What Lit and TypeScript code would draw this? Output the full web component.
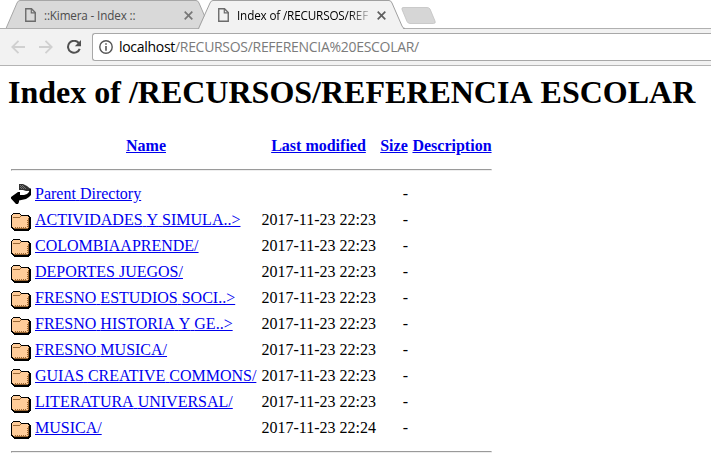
import { LitElement, html, css } from "lit";
import { customElement } from "lit/decorators.js";

const pageIcon = html`<svg class="page" width="11" height="14" viewBox="0 0 11 14">
  <path d="M.75 .75H6.5L10.25 4.5V13.25H.75Z" fill="none" stroke="currentColor" stroke-width="1.4"/>
  <path d="M6.3 .9V4.8H10.2" fill="none" stroke="currentColor" stroke-width="1.2"/>
</svg>`;

const closeIcon = html`<svg class="close" width="9" height="9" viewBox="0 0 9 9">
  <path d="M.7 .7L8.3 8.3M8.3 .7L.7 8.3" stroke="currentColor" stroke-width="1.7"/>
</svg>`;

const folderIcon = html`<svg width="20" height="22" viewBox="0 0 20 22" shape-rendering="crispEdges">
  <path fill="#000" d="M2 4h7v1h1v1h8v1h1v1h1v12h-1v1h-1v1h-15v-1h-1v-1h-1v-1h-1v-13h1v-1h1z"/>
  <path fill="#ffcc99" d="M2 5h7v1h1v1h7v1h1v11h-1v1h-14v-1h-1v-1h-1v-12h1z"/>
  <path fill="#996633" d="M2 8h7v1h-7zM9 7h1v1h-1zM17 9h1v10h-1zM3 19h14v1h-14z"/>
  <path fill="#996633" d="M4 18h1v1h-1zM6 18h1v1h-1zM8 18h1v1h-1zM10 18h1v1h-1zM12 18h1v1h-1zM14 18h1v1h-1zM16 17h1v1h-1zM16 15h1v1h-1zM16 13h1v1h-1zM16 11h1v1h-1z"/>
</svg>`;

const backIcon = html`<svg width="20" height="22" viewBox="0 0 20 22">
  <path fill="#333" d="M8 1H12L16 3L19 5.500V8H15L12 7H8Z"/>
  <path fill="#777" d="M9 2h1v1h-1zM11 2h1v1h-1zM10 3h1v1h-1zM12 3h1v1h-1zM9 4h1v1h-1zM11 4h1v1h-1zM13 4h1v1h-1zM10 5h1v1h-1zM12 5h1v1h-1zM14 5h1v1h-1z"/>
  <path fill="#000" d="M19 5L20 6V12L18 14L15 16L8 17.500V19L7 21H5L0 15.500V14L7 9H9V12H13L16 11L18 9Z"/>
</svg>`;

// Spaces sit in their own span so that letters are kerned within words only.
const words = (text: string) =>
  text.split(" ").map((w, i) => (i ? html`<span class="sp"> </span>${w}` : w));

@customElement("browser-chrome")
class BrowserChrome extends LitElement {
  static styles = css`
    :host { display: block; position: relative; height: 66px; font-family: "Open Sans", "Noto Sans", sans-serif; }
    .shape { position: absolute; inset: 0; width: 711px; height: 29px; }
    .tabs { position: relative; display: flex; height: 29px; color: #000; font-size: 11.7px; line-height: 30px; }
    .tab { display: flex; align-items: center; width: 193px; box-sizing: border-box; padding-left: 25px; }
    .tab.first { color: #4c4c4c; }
    .page { color: #6b6b6b; flex: none; margin-top: 1px; }
    .title { margin-left: 8px; width: 133px; overflow: hidden; white-space: nowrap; letter-spacing: -.15px; }
    .second .title { -webkit-mask-image: linear-gradient(90deg, #000 112px, transparent 136px); mask-image: linear-gradient(90deg, #000 112px, transparent 136px); }
    .close { margin: 1px 0 0 8px; color: #5f5f5f; flex: none; }
    .first .close { color: #777; }
    .bar { display: flex; align-items: center; height: 36px; background: #f2f2f2; border-bottom: 1px solid #b4b4b4; }
    .nav { display: flex; align-items: center; padding-left: 11px; gap: 14px; width: 81px; }
    .field { display: flex; align-items: center; flex: 1; height: 26px; border: 1px solid #a8a8a8; border-right: 0; border-radius: 3px 0 0 3px; background: #fff; padding-left: 6px; }
    .url { margin-left: 6px; font-size: 14px; line-height: 26px; color: #7b7b7b; white-space: nowrap; letter-spacing: -.3px; }
    .host { color: #000; }
  `;
  render() {
    return html`
      <svg class="shape" viewBox="0 0 711 29">
        <path d="M6 28.5L17 3Q18 .5 20 .5H196Q198 .5 199 3L210 28.5Z" fill="#d9d9d9" stroke="#a6a6a6"/>
        <path d="M0 28.5H711" stroke="#b0b0b0"/>
        <path d="M199 29L210 3Q211 .5 213 .5H389Q391 .5 392 3L403 28.5V29Z" fill="#f2f2f2"/>
        <path d="M198.500 28.500L210 3Q211 .5 213 .5H389Q391 .5 392 3L402 26Q403 28.500 405 28.500" fill="none" stroke="#a0a0a0"/>
        <path d="M403 7.500H427Q429 7.500 430 9L435 21Q436 23.500 433.500 23.500H410Q408 23.500 407 21.500L402 9.500Q401.500 7.500 403 7.500Z" fill="#d6d6d6" stroke="#c2c2c2" stroke-width=".8"/>
      </svg>
      <div class="tabs">
        <div class="tab first">${pageIcon}<span class="title">::Kimera - Index ::</span>${closeIcon}</div>
        <div class="tab second">${pageIcon}<span class="title">Index of /RECURSOS/REF</span>${closeIcon}</div>
      </div>
      <div class="bar">
        <div class="nav">
          <svg width="14" height="14" viewBox="0 0 14 14"><path d="M14 7H1.500M7.500 .8L1.300 7L7.500 13.200" fill="none" stroke="#d0d0d0" stroke-width="1.8"/></svg>
          <svg width="14" height="14" viewBox="0 0 14 14"><path d="M0 7H12.500M6.500 .8L12.700 7L6.500 13.200" fill="none" stroke="#d0d0d0" stroke-width="1.8"/></svg>
          <svg width="14" height="14" viewBox="0 0 14 14"><path d="M11.700 3A6 6 0 1 0 12.700 8.800" fill="none" stroke="#505050" stroke-width="2"/><path d="M14 0V6.200H7.800Z" fill="#505050"/></svg>
        </div>
        <div class="field">
          <svg width="14" height="14" viewBox="0 0 14 14"><circle cx="7" cy="7" r="6.200" fill="none" stroke="#555" stroke-width="1.400"/><path d="M7 6V10.800M7 3.200V4.800" stroke="#555" stroke-width="1.600"/></svg>
          <span class="url"><span class="host">localhost</span>/RECURSOS/REFERENCIA%20ESCOLAR/</span>
        </div>
      </div>`;
  }
}

@customElement("directory-listing")
class DirectoryListing extends LitElement {
  static styles = css`
    :host { display: block; padding: 8px; font: 16px/18px "Liberation Serif", "Times New Roman", serif; color: #000; }
    h1 { margin: 0 0 21px; font-size: 32px; line-height: 36px; height: 37px; font-weight: bold; white-space: nowrap; }
    table { border-spacing: 2px; table-layout: fixed; width: 487px; }
    th, td { padding: 1px; vertical-align: top; white-space: nowrap; text-align: left; height: 22px; }
    th { text-align: center; }
    th a, .name a, .date span, .size span { display: inline-block; padding-top: 2px; }
    .sp { font-kerning: none; }
    .rule { height: auto; }
    .date, .size { text-align: right; }
    svg { display: block; }
    a { color: #0000ee; text-decoration: underline; }
    hr { margin: 8px 0; border: 1px solid; border-color: #9a9a9a #eee #eee #9a9a9a; }
    .c1 { width: 22px; } .c2 { width: 224px; } .c3 { width: 117px; } .c4 { width: 30px; }
  `;
  static rows: [string, string][] = [
    ["ACTIVIDADES Y SIMULA..>", "2017-11-23 22:23"],
    ["COLOMBIAAPRENDE/", "2017-11-23 22:23"],
    ["DEPORTES JUEGOS/", "2017-11-23 22:23"],
    ["FRESNO ESTUDIOS SOCI..>", "2017-11-23 22:23"],
    ["FRESNO HISTORIA Y GE..>", "2017-11-23 22:23"],
    ["FRESNO MUSICA/", "2017-11-23 22:23"],
    ["GUIAS CREATIVE COMMONS/", "2017-11-23 22:23"],
    ["LITERATURA UNIVERSAL/", "2017-11-23 22:23"],
    ["MUSICA/", "2017-11-23 22:24"],
  ];
  row(icon: unknown, name: string, date: string) {
    return html`<tr><td>${icon}</td><td class="name"><a>${words(name)}</a></td><td class="date"><span>${date}</span></td><td class="size"><span>-</span></td><td></td></tr>`;
  }
  render() {
    const rule = html`<tr><td class="rule" colspan="5"><hr></td></tr>`;
    return html`
      <h1>${words("Index of /RECURSOS/REFERENCIA ESCOLAR")}</h1>
      <table>
        <colgroup><col class="c1"><col class="c2"><col class="c3"><col class="c4"><col></colgroup>
        <tbody>
          <tr><th></th><th><a>Name</a></th><th><a>Last modified</a></th><th><a>Size</a></th><th><a>Description</a></th></tr>
          ${rule}
          ${this.row(backIcon, "Parent Directory", "")}
          ${DirectoryListing.rows.map(([n, d]) => this.row(folderIcon, n, d))}
          ${rule}
        </tbody>
      </table>`;
  }
}

@customElement("app-root")
class AppRoot extends LitElement {
  static styles = css`
    :host { display: block; width: 711px; height: 458px; overflow: hidden; background: #fff; }
  `;
  render() {
    return html`<browser-chrome></browser-chrome><directory-listing></directory-listing>`;
  }
}
